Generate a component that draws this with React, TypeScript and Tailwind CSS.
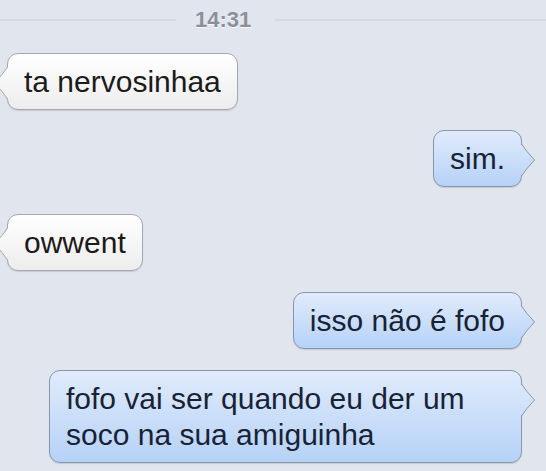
import { useId } from 'react'

type Msg = {
  text: string
  me: boolean
  mt: string
  wide?: boolean
  height: number
}

const messages: Msg[] = [
  { text: 'ta nervosinhaa', me: false, mt: 'mt-[13px]', height: 57 },
  { text: 'sim.', me: true, mt: 'mt-[20px]', height: 57 },
  { text: 'owwent', me: false, mt: 'mt-[27px]', height: 57 },
  { text: 'isso não é fofo', me: true, mt: 'mt-[21px]', height: 57 },
  {
    text: 'fofo vai ser quando eu der um soco na sua amiguinha',
    me: true,
    mt: 'mt-[21px]',
    wide: true,
    height: 93,
  },
]

function Tail({ me, height }: { me: boolean; height: number }) {
  const id = useId()
  const top = me ? '#e0ebfc' : '#ffffff'
  const bottom = me ? '#b6d2f7' : '#ededed'
  const stroke = me ? '#8797ae' : '#a6a8ad'
  // tail sits 14px below the bubble top, gradient spans the whole bubble
  return (
    <svg
      width="15"
      height="32"
      viewBox="0 0 15 32"
      className={`absolute top-[14px] ${me ? 'left-[calc(100%-1px)]' : 'right-[calc(100%-1px)]'}`}
    >
      <defs>
        <linearGradient id={id} gradientUnits="userSpaceOnUse" x1="0" y1={-14} x2="0" y2={height - 14}>
          <stop offset="0" stopColor={top} />
          <stop offset="1" stopColor={bottom} />
        </linearGradient>
      </defs>
      {me ? (
        <>
          <path d="M0 0 Q5 7 13.5 16 Q5 25 0 32 Z" fill={`url(#${id})`} />
          <path d="M0.5 0 Q5 7 13.5 16 Q5 25 0.5 32" fill="none" stroke={stroke} strokeWidth="1" />
        </>
      ) : (
        <>
          <path d="M15 0 Q10 7 1.5 16 Q10 25 15 32 Z" fill={`url(#${id})`} />
          <path d="M14.5 0 Q10 7 1.5 16 Q10 25 14.5 32" fill="none" stroke={stroke} strokeWidth="1" />
        </>
      )}
    </svg>
  )
}

function Bubble({ msg }: { msg: Msg }) {
  const { me } = msg
  return (
    <div className={`relative ${msg.mt} ${me ? 'self-end mr-[24px]' : 'self-start ml-[7px]'}`}>
      <div
        className={`rounded-[11px] border px-[16px] pt-[10px] pb-[9px] text-[30px] leading-[36px] shadow-[0_1px_1px_rgba(0,0,0,0.12)] ${
          me
            ? 'border-[#8797ae] bg-gradient-to-b from-[#e0ebfc] to-[#b6d2f7] text-[#182236]'
            : 'border-[#a6a8ad] bg-gradient-to-b from-white to-[#ededed] text-[#1b1b1b]'
        } ${msg.wide ? 'w-[473px]' : ''}`}
      >
        {msg.text}
      </div>
      <Tail me={me} height={msg.height} />
    </div>
  )
}

export default function App() {
  return (
    <div className="w-[546px] h-[471px] overflow-hidden bg-[#e1e5ed] font-['Liberation_Sans',Arial,sans-serif] flex flex-col">
      {/* Timestamp */}
      <div className="h-[40px] flex items-center shrink-0">
        <div className="w-[176px] h-[2px] bg-[#d6d9df]" />
        <span className="ml-[19px] mr-[24px] text-[22px] font-bold leading-none text-[#8b8f98] [text-shadow:0_1px_0_rgba(255,255,255,0.8)]">
          14:31
        </span>
        <div className="flex-1 h-[2px] bg-[#d6d9df]" />
      </div>

      {messages.map((m) => (
        <Bubble key={m.text} msg={m} />
      ))}
    </div>
  )
}
